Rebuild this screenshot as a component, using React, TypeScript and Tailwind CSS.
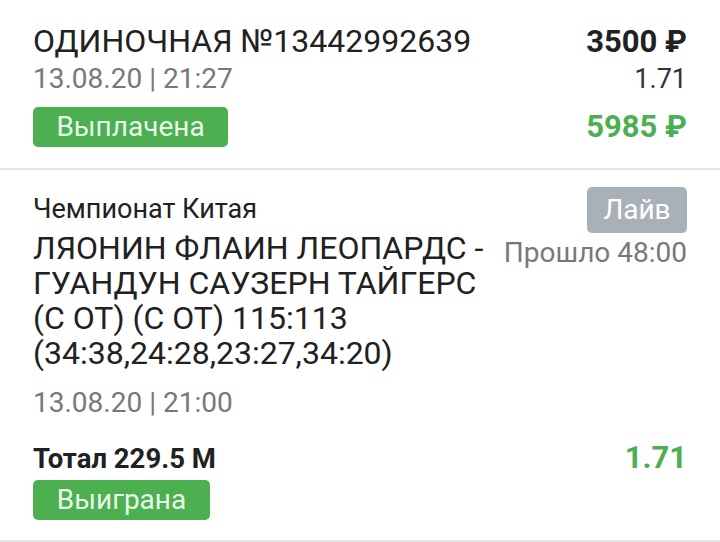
const font = { fontFamily: "Roboto, 'Noto Sans', sans-serif" }

const Badge = ({ label, className }: { label: string; className: string }) => (
  <div className={`flex items-center justify-center rounded-[5px] text-[28px] leading-none ${className}`}>
    {label}
  </div>
)

export default function App() {
  return (
    <div style={font} className="w-[720px] h-[542px] overflow-hidden bg-white text-[#212121]">
      {/* bet header */}
      <div className="px-[33px] pt-[22px] h-[170px] border-b-2 border-[#e6e6e6]">
        <div className="flex justify-between items-baseline">
          <span className="text-[32px] leading-[38px]">ОДИНОЧНАЯ №13442992639</span>
          <span className="text-[31px] leading-[38px] font-bold">3500 ₽</span>
        </div>
        <div className="flex justify-between items-baseline mt-[1px]">
          <span className="text-[28px] leading-[34px] text-[#787878]">13.08.20 | 21:27</span>
          <span className="text-[27px] leading-[34px] text-[#333]">1.71</span>
        </div>
        <div className="flex justify-between items-center mt-[11px]">
          <Badge label="Выплачена" className="w-[195px] h-[40px] bg-[#4caf50] text-[#e9f7ea]" />
          <span className="text-[31px] leading-[38px] font-bold text-[#4caf50]">5985 ₽</span>
        </div>
      </div>

      {/* event */}
      <div className="px-[33px] pt-[23px] h-[372px] border-b-2 border-[#e6e6e6]">
        <div className="flex justify-between">
          <div className="flex-1">
            <div className="text-[27px] leading-[32px]">Чемпионат Китая</div>
            <div className="text-[32px] leading-[35px] mt-[6px] w-[468px]">
              ЛЯОНИН ФЛАИН ЛЕОПАРДС - ГУАНДУН САУЗЕРН ТАЙГЕРС (С ОТ) (С ОТ) 115:113 (34:38,24:28,23:27,34:20)
            </div>
            <div className="text-[28px] leading-[34px] text-[#787878] mt-[15px]">13.08.20 | 21:00</div>
          </div>
          <div className="flex flex-col items-end -mt-[6px]">
            <Badge label="Лайв" className="w-[100px] h-[46px] bg-[#a9b1b8] text-white" />
            <span className="text-[28px] leading-[34px] text-[#787878] mt-[3px] whitespace-nowrap">Прошло 48:00</span>
          </div>
        </div>
        <div className="flex justify-between items-baseline mt-[22px]">
          <span className="text-[27.5px] leading-[32px] font-bold">Тотал 229.5 М</span>
          <span className="text-[31px] leading-[32px] font-bold text-[#4caf50]">1.71</span>
        </div>
        <Badge label="Выиграна" className="w-[177px] h-[40px] bg-[#4caf50] text-[#e9f7ea] mt-[5px]" />
      </div>
    </div>
  )
}
